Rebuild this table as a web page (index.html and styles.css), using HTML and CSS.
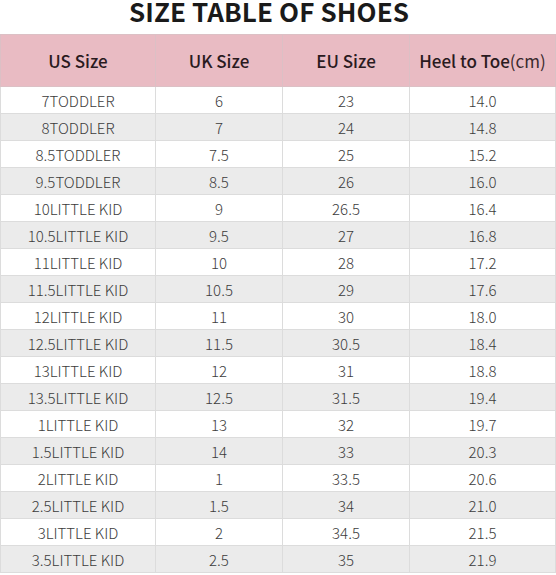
FILE: index.html
```html
<!DOCTYPE html>
<html>
<head>
<meta charset="utf-8">
<link rel="stylesheet" href="styles.css">
</head>
<body>
<div class="page">
  <h1 class="title">SIZE TABLE OF SHOES</h1>
  <table class="sizes">
    <colgroup>
      <col class="c1"><col class="c2"><col class="c3"><col class="c4">
    </colgroup>
    <thead>
      <tr><th>US Size</th><th>UK Size</th><th>EU Size</th><th>Heel to Toe<span class="unit">(cm)</span></th></tr>
    </thead>
    <tbody>
      <tr><td>7TODDLER</td><td>6</td><td>23</td><td>14.0</td></tr>
      <tr><td>8TODDLER</td><td>7</td><td>24</td><td>14.8</td></tr>
      <tr><td>8.5TODDLER</td><td>7.5</td><td>25</td><td>15.2</td></tr>
      <tr><td>9.5TODDLER</td><td>8.5</td><td>26</td><td>16.0</td></tr>
      <tr><td>10LITTLE KID</td><td>9</td><td>26.5</td><td>16.4</td></tr>
      <tr><td>10.5LITTLE KID</td><td>9.5</td><td>27</td><td>16.8</td></tr>
      <tr><td>11LITTLE KID</td><td>10</td><td>28</td><td>17.2</td></tr>
      <tr><td>11.5LITTLE KID</td><td>10.5</td><td>29</td><td>17.6</td></tr>
      <tr><td>12LITTLE KID</td><td>11</td><td>30</td><td>18.0</td></tr>
      <tr><td>12.5LITTLE KID</td><td>11.5</td><td>30.5</td><td>18.4</td></tr>
      <tr><td>13LITTLE KID</td><td>12</td><td>31</td><td>18.8</td></tr>
      <tr><td>13.5LITTLE KID</td><td>12.5</td><td>31.5</td><td>19.4</td></tr>
      <tr><td>1LITTLE KID</td><td>13</td><td>32</td><td>19.7</td></tr>
      <tr><td>1.5LITTLE KID</td><td>14</td><td>33</td><td>20.3</td></tr>
      <tr><td>2LITTLE KID</td><td>1</td><td>33.5</td><td>20.6</td></tr>
      <tr><td>2.5LITTLE KID</td><td>1.5</td><td>34</td><td>21.0</td></tr>
      <tr><td>3LITTLE KID</td><td>2</td><td>34.5</td><td>21.5</td></tr>
      <tr><td>3.5LITTLE KID</td><td>2.5</td><td>35</td><td>21.9</td></tr>
    </tbody>
  </table>
</div>
</body>
</html>
```
FILE: styles.css
```css
html, body {
  margin: 0;
  padding: 0;
  background: #ffffff;
}
.page {
  width: 556px;
  font-family: "Noto Sans CJK SC", "Noto Sans", sans-serif;
}
.title {
  margin: 0;
  height: 34px;
  line-height: 22px;
  font-size: 26px;
  font-weight: 700;
  text-align: center;
  color: #1a1a1a;
  padding-right: 18px;
  letter-spacing: 0.1px;
}
.sizes {
  border-collapse: collapse;
  table-layout: fixed;
  width: 555px;
}
.c1 { width: 155px; }
.c2 { width: 127px; }
.c3 { width: 127px; }
.c4 { width: 146px; }
.sizes th, .sizes td {
  border: 1px solid #dcdcdc;
  text-align: center;
  padding: 0;
}
.sizes th {
  background: #e9bbc3;
  height: 51px;
  font-size: 17px;
  font-weight: 500;
  color: #2a1a1e;
  border-color: #dcc0c5;
}
.sizes th .unit {
  font-weight: 400;
  color: #3a2a2e;
}
.sizes td {
  height: 26px;
  font-size: 15px;
  font-weight: 300;
  color: #3c3c3c;
}
.sizes tbody tr:nth-child(even) td {
  background: #ebebeb;
}
```
